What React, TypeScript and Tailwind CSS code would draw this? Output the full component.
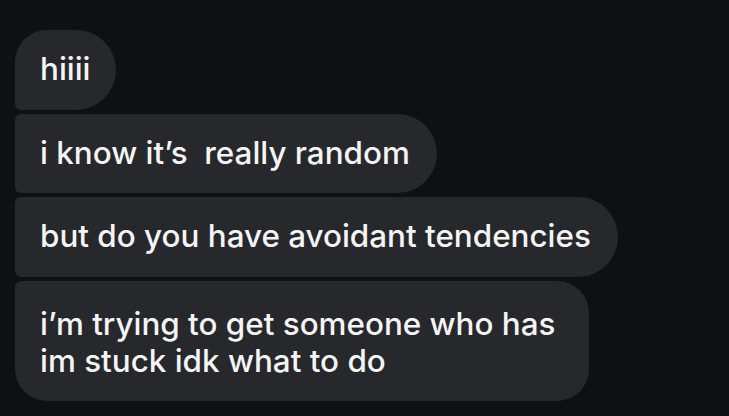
import React from "react";

export default function App() {
  const font = { fontFamily: "Inter, 'Open Sans', sans-serif" };
  return (
    <div
      className="w-[729px] h-[416px] overflow-hidden bg-[#0e1014] pt-[30px] pl-[15px] flex flex-col items-start gap-[4px] text-[#f4f4f5] text-[31.4px] font-medium"
      style={font}
    >
      <div className="h-[80px] flex items-center px-[25px] bg-[#26282c] rounded-tl-[32px] rounded-bl-[6px] rounded-r-[40px]">
        hiiii
      </div>
      <div className="h-[79px] flex items-center pl-[25px] pr-[27px] bg-[#26282c] rounded-l-[6px] rounded-r-[40px] whitespace-pre">
        {"i know it’s  really random"}
      </div>
      <div className="h-[80px] flex items-center pl-[25px] pr-[27px] bg-[#26282c] rounded-l-[6px] rounded-r-[40px]">
        but do you have avoidant tendencies
      </div>
      <div className="h-[120px] flex flex-col justify-center pl-[25px] pr-[34px] pt-[4px] bg-[#26282c] rounded-tl-[6px] rounded-bl-[32px] rounded-r-[32px] leading-[37px]">
        <div>i’m trying to get someone who has</div>
        <div>im stuck idk what to do</div>
      </div>
    </div>
  );
}
